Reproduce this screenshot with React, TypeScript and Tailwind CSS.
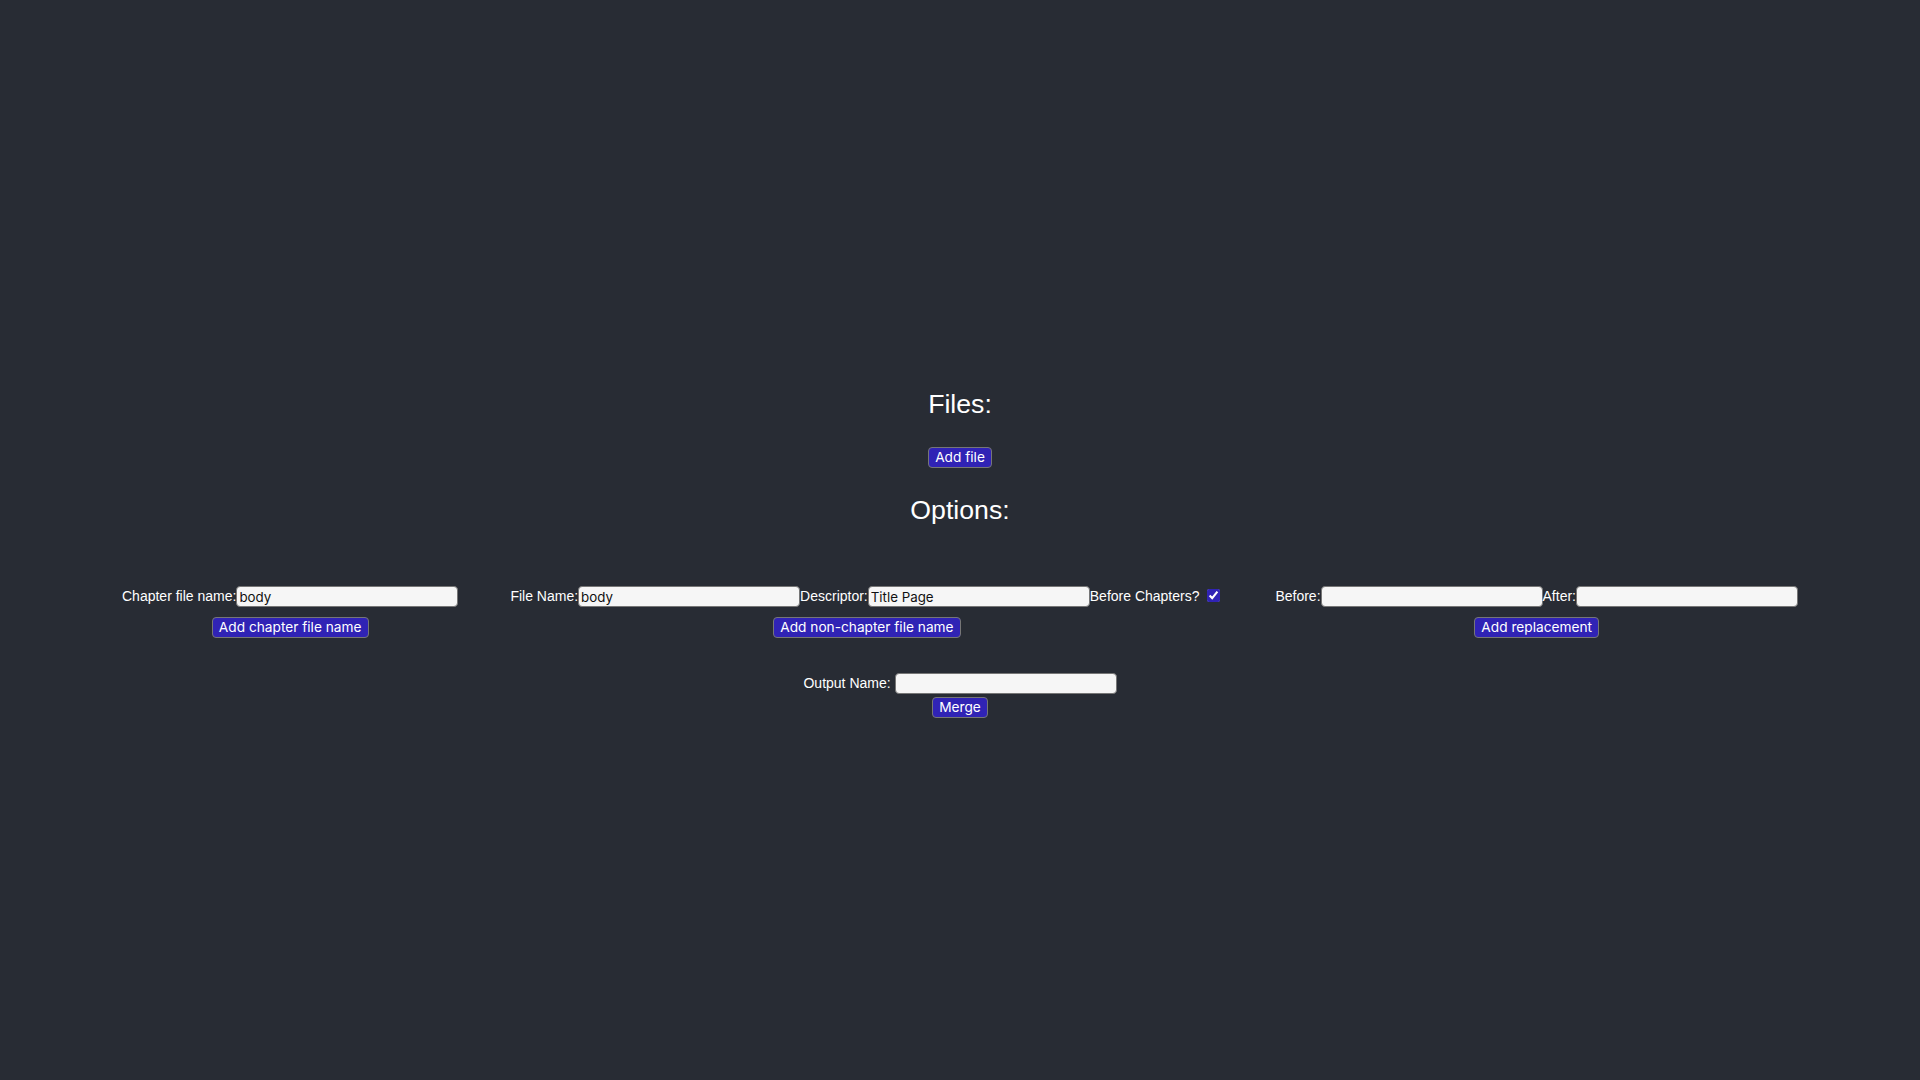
import React from "react";

const labelCls = "text-[14px] text-white whitespace-pre";
const inputCls =
  "w-[222px] h-[21px] bg-[#f6f6f6] border border-[#767676] rounded-[4px] px-[2px] text-[13.33px] text-[#111] outline-none";
const btnCls =
  "block h-[21px] px-[6px] bg-[#3023b5] border border-[#767676] rounded-[4px] text-white text-[13.7px] leading-[17px] whitespace-nowrap";

const inputFont = { fontFamily: "Inter, 'Noto Sans', sans-serif" };

function Label({ children }: { children: React.ReactNode }) {
  return <span className={labelCls}>{children}</span>;
}

function TextInput({ value }: { value?: string }) {
  return <input type="text" defaultValue={value ?? ""} className={inputCls} style={inputFont} />;
}

function Btn({ children }: { children: React.ReactNode }) {
  return (
    <button className={btnCls} style={inputFont}>
      {children}
    </button>
  );
}

export default function App() {
  return (
    <div
      className="min-h-screen bg-[#282c34] flex flex-col items-center pt-[388px] text-white"
      style={{ fontFamily: "'Liberation Sans', Arial, sans-serif" }}
    >
      <h2 className="text-[26.67px] leading-[32px] font-normal">Files:</h2>
      <div className="mt-[27px] flex">
        <Btn>Add file</Btn>
      </div>
      <h2 className="mt-[26px] text-[26.67px] leading-[32px] font-normal">Options:</h2>

      <div className="mt-[60px] flex flex-row justify-center gap-[52px]">
        <div className="flex flex-col items-center gap-[10px]">
          <div className="flex items-center h-[21px]">
            <Label>Chapter file name:</Label>
            <TextInput value="body" />
          </div>
          <Btn>Add chapter file name</Btn>
        </div>

        <div className="flex flex-col items-center gap-[10px]">
          <div className="flex items-center h-[21px]">
            <Label>File Name:</Label>
            <TextInput value="body" />
            <Label>Descriptor:</Label>
            <TextInput value="Title Page" />
            <Label>Before Chapters? </Label>
            <input
              type="checkbox"
              defaultChecked
              className="ml-[4px] mr-[3px] w-[13px] h-[13px] accent-[#3023b5] -translate-y-[1px]"
            />
          </div>
          <Btn>Add non-chapter file name</Btn>
        </div>

        <div className="flex flex-col items-center gap-[10px]">
          <div className="flex items-center h-[21px]">
            <Label>Before:</Label>
            <TextInput />
            <Label>After:</Label>
            <TextInput />
          </div>
          <Btn>Add replacement</Btn>
        </div>
      </div>

      <div className="mt-[35px] flex items-center h-[21px]">
        <Label>Output Name: </Label>
        <TextInput />
      </div>
      <div className="mt-[3px] flex">
        <Btn>Merge</Btn>
      </div>
    </div>
  );
}
